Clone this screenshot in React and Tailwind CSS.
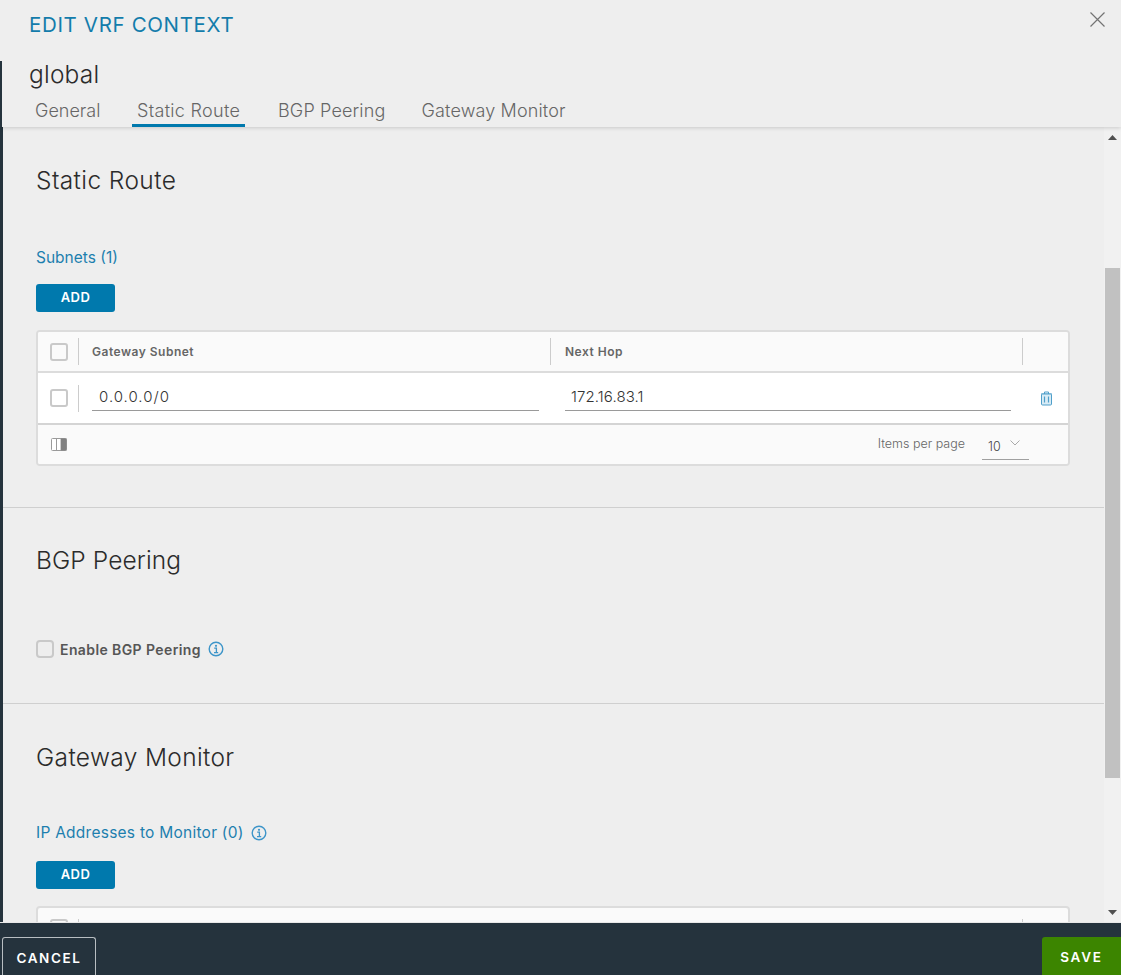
import React from "react";

function Info() {
  return (
    <svg width="16" height="16" viewBox="0 0 16 16" fill="none" className="block shrink-0">
      <circle cx="8" cy="8" r="6.8" stroke="#3d95c9" strokeWidth="1.4" />
      <circle cx="8" cy="4.8" r="1.1" fill="#3d95c9" />
      <path d="M6.2 7.2H8.4V11.4M6 11.6H10.2" stroke="#3d95c9" strokeWidth="1.3" />
    </svg>
  );
}

function Trash() {
  return (
    <svg width="13" height="15" viewBox="0 0 13 15" fill="none" className="block">
      <path d="M1 3H12M4.5 3V1H8.5V3" stroke="#4f9fca" strokeWidth="1" />
      <rect x="1.5" y="3" width="10" height="11" rx="1" stroke="#4f9fca" strokeWidth="1" fill="#d9ecf6" />
      <path d="M4.5 5.5V11.5M8.5 5.5V11.5" stroke="#4f9fca" strokeWidth="1.2" />
    </svg>
  );
}

function Columns() {
  return (
    <svg width="16" height="13" viewBox="0 0 16 13" fill="none" className="block">
      <rect x="0.5" y="0.5" width="15" height="12" rx="1" fill="#fff" stroke="#9a9a9a" />
      <path d="M5.5 0.5V12.5M10 0.5V12.5" stroke="#9a9a9a" />
      <rect x="10" y="0.5" width="5.5" height="12" fill="#808080" />
    </svg>
  );
}

function Box({ className = "" }) {
  return <span className={`block w-[18px] h-[18px] rounded-[3px] border-2 border-[#c9c9c9] shrink-0 ${className}`} />;
}

function Sep() {
  return <span className="block w-px bg-[#cccccc] h-[27px] shrink-0" />;
}

function AddButton() {
  return (
    <button className="block w-[79px] h-[28px] rounded-[3px] bg-[#0079ad] text-white text-[13px] font-semibold tracking-[0.5px]">
      ADD
    </button>
  );
}

function Heading({ children, className = "tracking-[0.4px]" }) {
  return <h2 className={`text-[24.5px] leading-[32px] font-light text-[#2b2b2b] ${className}`}>{children}</h2>;
}

export default function App() {
  return (
    <div
      className="w-[1121px] h-[975px] overflow-hidden flex flex-col bg-[#eeeeee]"
      style={{ fontFamily: '"Inter", "Noto Sans", sans-serif' }}
    >
      {/* Header */}
      <header className="h-[127px] shrink-0 relative z-10 bg-[#eeeeee] shadow-[0_1px_4px_rgba(0,0,0,0.16)] flex">
        <div className="w-[2px] mt-[61px] bg-[#25333d] shrink-0" />
        <div className="flex-1 pl-[27px]">
          <div className="h-[50px] pt-[11px] text-[20.5px] leading-[28px] text-[#137cab] font-normal tracking-[0.65px]">
            EDIT VRF CONTEXT
          </div>
          <div className="h-[36px] pt-[9px] text-[24.5px] leading-[30px] font-light text-[#2b2b2b] tracking-[0.2px]">
            global
          </div>
          <nav className="flex h-[41px] pt-[13px] text-[18px] font-light text-[#666666] tracking-[0.15px]">
            <span className="block ml-[6px] w-[64px] mr-[33px] leading-[24px] tracking-[0px]">General</span>
            <span className="block w-[113px] h-[28px] pl-[5px] mr-[33px] leading-[24px] border-b-[3px] border-[#0079ad] whitespace-nowrap tracking-[0.3px]">
              Static Route
            </span>
            <span className="block mr-[36px] leading-[24px]">BGP Peering</span>
            <span className="block leading-[24px]">Gateway Monitor</span>
          </nav>
        </div>
        <button className="absolute left-[1090px] top-[12px]" aria-label="Close">
          <svg width="15" height="15" viewBox="0 0 15 15" className="block">
            <path d="M0.5 0.5L14.5 14.5M14.5 0.5L0.5 14.5" stroke="#737373" strokeWidth="1.2" />
          </svg>
        </button>
      </header>

      {/* Body */}
      <div className="flex-1 min-h-0 flex">
        <div className="w-[3px] bg-[#25333d] shrink-0" />
        <main className="flex-1 min-w-0 overflow-hidden">
          {/* Static route */}
          <section className="h-[381px] px-[33px] pt-[37px] border-b border-[#cfcfcf]">
            <Heading>Static Route</Heading>
            <div className="mt-[52px] text-[15.5px] leading-[20px] text-[#1d7fae]">Subnets (1)</div>
            <div className="mt-[16px]">
              <AddButton />
            </div>
            <div className="mt-[18px] w-[1034px] h-[136px] rounded-[4px] border-2 border-[#dcdcdc] bg-white overflow-hidden flex flex-col">
              <div className="h-[41px] shrink-0 bg-[#fafafa] border-b-2 border-[#dcdcdc] flex items-center pl-[12px]">
                <Box />
                <span className="block ml-[10px]"><Sep /></span>
                <span className="block w-[471px] pl-[13px] text-[12px] font-semibold text-[#666666] tracking-[0.5px]">
                  Gateway Subnet
                </span>
                <Sep />
                <span className="block w-[471px] pl-[14px] text-[12px] font-semibold text-[#666666] tracking-[0.5px]">
                  Next Hop
                </span>
                <Sep />
              </div>
              <div className="h-[52px] shrink-0 bg-white border-b-2 border-[#d4d4d4] flex items-center pl-[12px]">
                <Box />
                <span className="block ml-[10px]"><Sep /></span>
                <div className="ml-[13px] -mt-[2px] w-[447px] h-[27px] border-b border-[#9a9a9a] pl-[7px] text-[15px] leading-[26px] font-light text-[#333333] tracking-[1px]">
                  0.0.0.0/0
                </div>
                <div className="ml-[26px] -mt-[2px] w-[446px] h-[27px] border-b border-[#9a9a9a] pl-[6px] text-[15px] leading-[26px] font-light text-[#333333] tracking-[0.1px]">
                  172.16.83.1
                </div>
                <span className="block ml-[29px]"><Trash /></span>
              </div>
              <div className="flex-1 bg-[#fafafa] flex items-center pl-[13px]">
                <Columns />
                <span className="ml-auto text-[12.5px] font-light text-[#666666]">Items per page</span>
                <div className="ml-[17px] mr-[39px] mt-[4px] w-[47px] h-[26px] border-b border-[#a0a0a0] flex items-start pl-[6px] pt-[4px] text-[12.5px] font-light text-[#444444]">
                  <span className="block leading-[18px]">10</span>
                  <svg width="10" height="6" viewBox="0 0 10 6" className="ml-[9px] mt-[2px]">
                    <path d="M0.5 0.5L5 5L9.5 0.5" fill="none" stroke="#aaaaaa" strokeWidth="1" />
                  </svg>
                </div>
              </div>
            </div>
          </section>

          {/* BGP */}
          <section className="h-[196px] px-[33px] pt-[36px] border-b border-[#cfcfcf]">
            <Heading className="tracking-[0.1px]">BGP Peering</Heading>
            <div className="mt-[63px] flex items-center h-[20px]">
              <Box className="rounded-[4px]" />
              <span className="ml-[6px] text-[14px] font-semibold text-[#565656] tracking-[0.4px]">Enable BGP Peering</span>
              <span className="block ml-[7px]"><Info /></span>
            </div>
          </section>

          {/* Gateway Monitor */}
          <section className="px-[33px] pt-[37px]">
            <Heading className="tracking-[0.35px]">Gateway Monitor</Heading>
            <div className="mt-[50px] flex items-center h-[20px]">
              <span className="text-[15.5px] text-[#1d7fae] tracking-[0.25px]">IP Addresses to Monitor (0)</span>
              <span className="block ml-[7px]"><Info /></span>
            </div>
            <div className="mt-[18px]">
              <AddButton />
            </div>
            <div className="mt-[17px] w-[1034px] h-[60px] rounded-t-[4px] border-2 border-[#dcdcdc] bg-[#fafafa] flex pt-[11px] pl-[12px]">
              <Box />
              <span className="block ml-[10px]"><Sep /></span>
              <span className="block ml-[943px]"><Sep /></span>
            </div>
          </section>
        </main>

        {/* Scrollbar */}
        <div className="w-[17px] shrink-0 bg-[#f1f1f1] flex flex-col items-center">
          <svg width="9" height="5" viewBox="0 0 9 5" className="mt-[8px] shrink-0">
            <path d="M4.5 0L9 5H0Z" fill="#505050" />
          </svg>
          <div className="mt-[128px] w-[15px] h-[510px] bg-[#c1c1c1] shrink-0" />
          <svg width="9" height="5" viewBox="0 0 9 5" className="mt-auto mb-[7px] shrink-0">
            <path d="M4.5 5L9 0H0Z" fill="#505050" />
          </svg>
        </div>
      </div>

      {/* Footer */}
      <footer className="h-[53px] shrink-0 bg-[#25333d] border-t border-[#e8e8e8] flex items-end justify-between pl-[2px]">
        <button className="w-[94px] h-[38px] pt-[3px] rounded-t-[3px] border border-b-0 border-[#b8bec2] text-white text-[13.5px] font-semibold tracking-[1.6px]">
          CANCEL
        </button>
        <button className="w-[79px] h-[38px] pt-[3px] rounded-tl-[3px] bg-[#3c8500] text-white text-[13.5px] font-semibold tracking-[1.8px]">
          SAVE
        </button>
      </footer>
    </div>
  );
}
